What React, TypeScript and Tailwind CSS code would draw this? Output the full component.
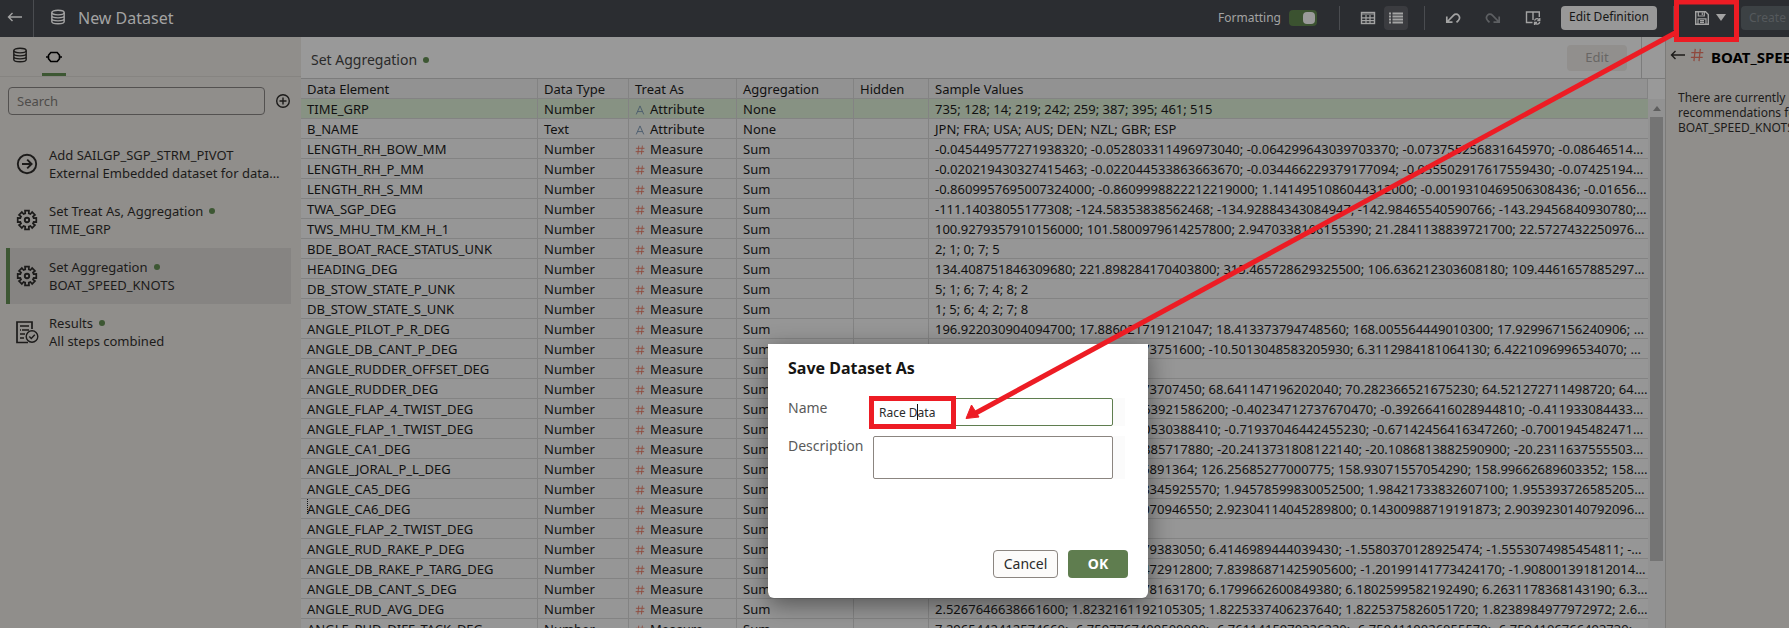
import React from "react";

type Kind = "Attribute" | "Measure";
type Row = [name: string, values: string, type?: string, kind?: Kind, aggregation?: string];

const rows: Row[] = [
  ["TIME_GRP", "735; 128; 14; 219; 242; 259; 387; 395; 461; 515", "Number", "Attribute", "None"],
  ["B_NAME", "JPN; FRA; USA; AUS; DEN; NZL; GBR; ESP", "Text", "Attribute", "None"],
  ["LENGTH_RH_BOW_MM", "-0.045449577271938320; -0.052803311496973040; -0.064299643039703370; -0.073755256831645970; -0.086465142660141"],
  ["LENGTH_RH_P_MM", "-0.020219430327415463; -0.022044533863663670; -0.034466229379177094; -0.055502917617559430; -0.074251942336559"],
  ["LENGTH_RH_S_MM", "-0.8609957695007324000; -0.8609998822212219000; 1.1414951086044312000; -0.0019310469506308436; -0.016562500596"],
  ["TWA_SGP_DEG", "-111.14038055177308; -124.58353838562468; -134.92884343084947; -142.98465540590766; -143.29456840930780; -144.0912"],
  ["TWS_MHU_TM_KM_H_1", "100.9279357910156000; 101.5800979614257800; 2.9470338106155390; 21.2841138839721700; 22.5727432250976570; 23.1"],
  ["BDE_BOAT_RACE_STATUS_UNK", "2; 1; 0; 7; 5"],
  ["HEADING_DEG", "134.408751846309680; 221.898284170403800; 315.465728629325500; 106.636212303608180; 109.446165788529750; 110.23"],
  ["DB_STOW_STATE_P_UNK", "5; 1; 6; 7; 4; 8; 2"],
  ["DB_STOW_STATE_S_UNK", "1; 5; 6; 4; 2; 7; 8"],
  ["ANGLE_PILOT_P_R_DEG", "196.922030904094700; 17.886021719121047; 18.413373794748560; 168.005564449010300; 17.929967156240906; 172.4410"],
  ["ANGLE_DB_CANT_P_DEG", "6.1983746510293840; 6.2048319473751600; -10.5013048583205930; 6.3112984181064130; 6.4221096996534070; 6.451208"],
  ["ANGLE_RUDDER_OFFSET_DEG", ""],
  ["ANGLE_RUDDER_DEG", "67.918264530192740; 66.203948173707450; 68.641147196202040; 70.282366521675230; 64.521272711498720; 64.9441028"],
  ["ANGLE_FLAP_4_TWIST_DEG", "-0.41293847162038400; -0.39810463921586200; -0.40234712737670470; -0.39266416028944810; -0.41193308443340200"],
  ["ANGLE_FLAP_1_TWIST_DEG", "-0.70918273645501200; -0.6983140530388410; -0.71937046442455230; -0.67142456416347260; -0.700194548247182100"],
  ["ANGLE_CA1_DEG", "-20.198273645501280; -20.182730885717880; -20.2413731808122140; -20.1086813882590900; -20.231163755550337100"],
  ["ANGLE_JORAL_P_L_DEG", "125.87364519283740; 126.0918275891364; 126.25685277000775; 158.93071557054290; 158.99662689603352; 158.9012038"],
  ["ANGLE_CA5_DEG", "1.92736455102983700; 1.93827408345925570; 1.94578599830052500; 1.98421733832607100; 1.95539372658520550; 1.9412"],
  ["ANGLE_CA6_DEG", "2.91827364501928300; 0.1502938070946550; 2.92304114045289800; 0.14300988719191873; 2.90392301407920960; -1.204"],
  ["ANGLE_FLAP_2_TWIST_DEG", ""],
  ["ANGLE_RUD_RAKE_P_DEG", "6.3928174650192830; 6.4018274479383050; 6.4146989444039430; -1.5580370128925474; -1.5553074985454811; -1.5501"],
  ["ANGLE_DB_RAKE_P_TARG_DEG", "7.81927364501827300; 7.8273645472912800; 7.83986871425905600; -1.20199141773424170; -1.90800139181201440; 7.1"],
  ["ANGLE_DB_CANT_S_DEG", "6.1827364519283740; 6.1726354878163170; 6.1799662600849380; 6.1802599582192490; 6.2631178368143190; 6.379301"],
  ["ANGLE_RUD_AVG_DEG", "2.5267646638661600; 1.8232161192105305; 1.8225337406237640; 1.8225375826051720; 1.8238984977972972; 2.6298140"],
  ["ANGLE_RUD_DIFF_TACK_DEG", "7.2965442412574660; -6.7597767409500000; -6.7611415970326220; -6.7594110026055570; -6.7594106766493730; 7.510"],
];

function Svg({ size = 16, className = "", children }: { size?: number; className?: string; children: React.ReactNode }) {
  return (
    <svg width={size} height={size} viewBox="0 0 16 16" fill="none" stroke="currentColor" strokeWidth="1.4" className={`shrink-0 ${className}`} aria-hidden="true">
      {children}
    </svg>
  );
}

const Database = ({ className = "" }: { className?: string }) => (
  <Svg className={className}>
    <ellipse cx="8" cy="3.6" rx="6.2" ry="2.3" />
    <path d="M1.8 3.6v8.8c0 1.3 2.8 2.3 6.2 2.3s6.2-1 6.2-2.3V3.6M1.8 6.6c0 1.3 2.8 2.3 6.2 2.3s6.2-1 6.2-2.3M1.8 9.6c0 1.3 2.8 2.3 6.2 2.3s6.2-1 6.2-2.3" />
  </Svg>
);

const ArrowLeft = ({ className = "" }: { className?: string }) => (
  <Svg className={className}>
    <path d="M1.5 8H15M5.5 4l-4 4 4 4" />
  </Svg>
);

const Hash = ({ size, className = "" }: { size: number; className?: string }) => (
  <Svg size={size} className={`text-[#8f493d] ${className}`}>
    <path d="M6 1L4.5 15M11.8 1l-1.500 14M1.500 5.300h13.700M1 10.600h13.500" />
  </Svg>
);

// Outline of an eight-toothed wheel centred on (11, 11).
const gearPoints = [0, 45, 90, 135, 180, 225, 270, 315]
  .flatMap((a) => [
    [6.9, a - 15],
    [9.5, a - 12],
    [9.5, a + 12],
    [6.9, a + 15],
  ])
  .map(([r, a]) => {
    const t = (a * Math.PI) / 180;
    return `${(11 + r * Math.cos(t)).toFixed(2)},${(11 + r * Math.sin(t)).toFixed(2)}`;
  })
  .join(" ");

const Gear = () => (
  <svg width="22" height="22" viewBox="0 0 22 22" fill="none" stroke="currentColor" strokeWidth="1.7" aria-hidden="true">
    <polygon points={gearPoints} />
    <circle cx="11" cy="11" r="2.2" strokeWidth="1.9" />
  </svg>
);

const AddStep = () => (
  <svg width="22" height="22" viewBox="0 0 22 22" fill="none" stroke="currentColor" strokeWidth="1.9" aria-hidden="true">
    <circle cx="11" cy="11" r="9.2" />
    <path d="M6 11h9.5M11.2 6.6l4.400 4.400-4.400 4.400" />
  </svg>
);

const ResultStep = () => (
  <svg width="24" height="24" viewBox="0 0 24 24" fill="none" stroke="currentColor" strokeWidth="1.7" aria-hidden="true">
    <path d="M17 9V2H2v20.500h11" />
    <path d="M5 6h9M7 10h7M5 10h1M5 14h5M5 18h4" />
    <circle cx="17" cy="16.500" r="5.800" strokeWidth="1.400" />
    <path d="M14.300 16.500l2 2 3.500-3.800" strokeWidth="1.400" />
  </svg>
);

const Dot = () => <span className="size-1.5 shrink-0 rounded-full bg-[#3d5733]" />;

const steps = [
  { icon: <AddStep />, title: "Add SAILGP_SGP_STRM_PIVOT", detail: "External Embedded dataset for datamart", dot: false },
  { icon: <Gear />, title: "Set Treat As, Aggregation", detail: "TIME_GRP", dot: true },
  { icon: <Gear />, title: "Set Aggregation", detail: "BOAT_SPEED_KNOTS", dot: true, active: true },
  { icon: <ResultStep />, title: "Results", detail: "All steps combined", dot: true },
];

function Header() {
  return (
    <header className="flex h-[37px] shrink-0 items-center bg-[#2b2d31] text-[#a3a3a3]">
      <button aria-label="Back" className="flex h-full w-[34px] items-center justify-center border-r border-[#4a4c50] pr-1 pb-1">
        <ArrowLeft />
      </button>
      <Database className="mb-1 ml-4" />
      <h1 className="ml-3 pb-0.5 text-base">New Dataset</h1>
      <div className="ml-auto flex h-6 items-center pb-0.5">
        <span className="text-xs">Formatting</span>
        <button role="switch" aria-checked="true" aria-label="Formatting" className="ml-2 flex h-4 w-7 items-center justify-end rounded bg-[#3b5230] px-0.5">
          <span className="h-3 w-3 rounded-sm bg-[#9a9a9a]" />
        </button>
        <span className="ml-[22px] h-6 w-px bg-[#4a4c50]" />
        <button aria-label="Grid view" className="ml-3 flex h-6 w-8 items-center justify-center">
          <Svg>
            <rect x="1.500" y="2.500" width="13" height="11" />
            <path d="M2 4h12M6 5v8M10 5v8M2 7.800h12M2 10.600h12" strokeWidth="1.200" />
          </Svg>
        </button>
        <button aria-label="List view" className="flex h-6 w-6 items-center justify-center rounded-sm bg-[#3b3c40]">
          <Svg>
            <path d="M1 3.500h2M4.500 3.500H15M1 6.500h2M4.500 6.500H15M1 9.500h2M4.500 9.500H15M1 12.500h2M4.500 12.500H15" strokeWidth="1.800" />
          </Svg>
        </button>
        <span className="ml-4 h-6 w-px bg-[#4a4c50]" />
        <button aria-label="Undo" className="ml-5">
          <Svg>
            <path d="M1.800 6.500v5.700h5.700M2 12L8.500 5.300c1.500-1.500 3.700-1.500 5 0s1.300 3.500 0 5l-2 2" strokeWidth="1.700" />
          </Svg>
        </button>
        <button aria-label="Redo" className="ml-6 text-[#5d5f62]">
          <Svg>
            <path d="M14.200 6.500v5.700H8.500M14 12L7.500 5.300C6 3.800 3.800 3.800 2.500 5.300s-1.300 3.500 0 5l2 2" strokeWidth="1.700" />
          </Svg>
        </button>
        <button aria-label="Preview" className="ml-6">
          <Svg>
            <path d="M7.500 12.500H1.500V2h12.800v5M8 2v8" />
            <path d="M9.500 10.500a2.800 2.800 0 0 1 5-.5M14.800 12a2.800 2.800 0 0 1-5 1M14.800 8v2.500h-2.500M9.500 15v-2.500H12" strokeWidth="1.300" />
          </Svg>
        </button>
        <button className="ml-5 h-6 w-24 rounded bg-[#989898] pb-px text-xs whitespace-nowrap text-[#161616]">Edit Definition</button>
        <span className="ml-4 h-6 w-px bg-[#4a4c50]" />
        <button aria-label="Save" className="ml-5 flex h-6 items-center gap-1.5">
          <Svg>
            <path d="M1.700 1.700h9.800l2.800 2.800v9.800H1.700z" />
            <path d="M4.300 2v4h6V2M8.300 2.500v2.500M4 14V8.800h8V14M6 10.600h4M6 12.400h4" strokeWidth="1.200" />
          </Svg>
          <svg width="10" height="7" viewBox="0 0 10 7" fill="currentColor" aria-hidden="true">
            <path d="M0 0h10L5 7z" />
          </svg>
        </button>
        <div className="ml-[15px] w-12 overflow-hidden">
          <button disabled className="block h-6 w-28 rounded bg-[#3c4144] pl-2 text-left text-xs whitespace-nowrap text-[#55595c]">Create Dataset</button>
        </div>
      </div>
    </header>
  );
}

function StepsPanel() {
  return (
    <aside className="flex w-[301px] shrink-0 flex-col bg-[#908e8b] text-[#1c1b1a]">
      <nav className="flex h-10 border-b border-[#868481] pl-2">
        <button aria-label="Data" className="flex w-6 items-center justify-center pb-1">
          <Database />
        </button>
        <button aria-label="Steps" className="ml-2.5 flex w-6 items-center justify-center border-y-3 border-t-transparent border-b-[#3d5733]">
          <Svg className="text-black">
            <path d="M0 8h2.500M13.500 8H16M4.800 3.500h6.400l2.300 2.700v3.600l-2.300 2.700H4.800L2.500 9.800V6.200z" strokeWidth="1.600" />
          </Svg>
        </button>
      </nav>
      <div className="flex items-center gap-2.5 px-2 pt-2.5">
        <input aria-label="Search" placeholder="Search" className="h-7 w-[257px] rounded border border-[#535150] px-2 text-[13px] placeholder:text-[#4e4c4a]" />
        <button aria-label="Add step">
          <Svg>
            <circle cx="8" cy="8" r="6.300" />
            <path d="M8 4.500v7M4.500 8h7" />
          </Svg>
        </button>
      </div>
      <ul className="mt-[21px] pr-2.5 pl-1.5">
        {steps.map((s, i) => (
          <li key={i} className={`flex h-14 items-center border-l-4 ${s.active ? "border-[#3d5733] bg-[#868482]" : "border-transparent"}`}>
            <span className="flex w-[34px] shrink-0 justify-center">{s.icon}</span>
            <div className="min-w-0 pl-[5px] text-[13px] leading-[18px]">
              <div className="flex items-center gap-1.5 whitespace-nowrap">
                {s.title}
                {s.dot && <Dot />}
              </div>
              <div className="truncate">{s.detail}</div>
            </div>
          </li>
        ))}
      </ul>
    </aside>
  );
}

const cell = "truncate border-b border-[#838383] pt-0.5 pl-1.5 text-left font-normal";

function DataGrid() {
  return (
    <main className="flex min-w-0 flex-1 flex-col bg-[#999999] text-[#111111]">
      <div className="flex h-[42px] shrink-0 items-center border-b border-[#7c7c7c]">
        <h2 className="flex items-center gap-1.5 pt-1 pl-2.5 text-sm text-[#2a2a2a]">
          Set Aggregation <Dot />
        </h2>
        <button disabled className="mr-3.5 ml-auto h-[26px] w-[60px] rounded bg-[#918f8d] text-[13px] text-[#686664]">Edit</button>
        <span className="h-full w-6 border-l border-[#7c7c7c]" />
      </div>
      <div className="flex min-h-0 flex-1">
        <div className="min-w-0 flex-1 overflow-hidden">
          <table className="w-full table-fixed border-separate border-spacing-0 bg-[#969696] text-[13px] leading-[17px]">
            <colgroup>
              <col className="w-[237px]" />
              <col className="w-[91px]" />
              <col className="w-[108px]" />
              <col className="w-[117px]" />
              <col className="w-[75px]" />
              <col />
            </colgroup>
            <thead>
              <tr className="h-5 bg-[#929292]">
                {["Data Element", "Data Type", "Treat As", "Aggregation", "Hidden", "Sample Values"].map((h) => (
                  <th key={h} scope="col" className={`${cell} border-r`}>{h}</th>
                ))}
              </tr>
            </thead>
            <tbody>
              {rows.map(([name, values, type = "Number", kind = "Measure", agg = "Sum"], i) => (
                <tr key={name} className={`h-5 ${i === 0 ? "bg-[#879283]" : ""}`}>
                  <td className={`${cell} border-r`}>{name}</td>
                  <td className={`${cell} border-r`}>{type}</td>
                  <td className={`${cell} border-r`}>
                    <span className="flex items-center">
                      <span className="mr-[5px] flex w-2.5 justify-center">
                        {kind === "Measure" ? (
                          <Hash size={10} />
                        ) : (
                          <Svg size={10} className="text-[#47596c]">
                            <path d="M2 15L8 1.500 14 15M4.300 10.500h7.400" />
                          </Svg>
                        )}
                      </span>
                      {kind}
                    </span>
                  </td>
                  <td className={`${cell} border-r`}>{agg}</td>
                  <td className={`${cell} border-r`} />
                  <td className={cell}>{values}</td>
                </tr>
              ))}
            </tbody>
          </table>
        </div>
        <div className="mt-5 flex w-[17px] shrink-0 flex-col items-center bg-[#929292]">
          <svg width="8" height="5" viewBox="0 0 8 5" fill="#5e5e5e" className="mt-[7px] mb-1.5 shrink-0" aria-hidden="true">
            <path d="M4 0l4 5H0z" />
          </svg>
          <span className="h-[84%] w-[13px] bg-[#747474]" />
        </div>
      </div>
    </main>
  );
}

function DetailPanel() {
  return (
    <aside className="w-[124px] shrink-0 overflow-hidden border-l border-[#7c7b79] bg-[#908e8b] pl-1 whitespace-nowrap text-[#1c1b1a]">
      <div className="flex h-10 items-center">
        <button aria-label="Back to list" className="pb-1"><ArrowLeft /></button>
        <Hash size={14} className="mb-1 ml-1" />
        <h3 className="ml-[7px] text-[15px] font-bold text-black">BOAT_SPEED_KNOTS</h3>
      </div>
      <p className="mt-[13px] pl-2 text-xs leading-[15px]">
        There are currently no
        <br />
        recommendations for
        <br />
        BOAT_SPEED_KNOTS.
      </p>
    </aside>
  );
}

function SaveDialog() {
  return (
    <section role="dialog" aria-labelledby="save-title" className="absolute top-[344px] left-[768px] flex h-[254px] w-[380px] flex-col rounded-b-md bg-white px-5 pt-3 pb-5 text-sm text-[#5a5a5a] shadow-[0_6px_24px_rgba(0,0,0,0.45)]">
      <h2 id="save-title" className="text-base leading-6 font-bold text-[#161513]">Save Dataset As</h2>
      <form className="mt-[18px] flex flex-1 flex-col">
        <div className="flex items-start">
          <label htmlFor="name" className="w-[85px] leading-5">Name</label>
          <input id="name" defaultValue="Race Data" className="h-7 w-60 rounded-xs border border-[#5f7d4f] px-[5px] text-xs text-[#2b2b2b]" />
          <span className="h-7 w-3 bg-[#fbfbfb]" />
        </div>
        <div className="mt-2.5 flex items-start">
          <label htmlFor="description" className="w-[85px] leading-5">Description</label>
          <textarea id="description" className="h-[43px] w-60 resize-none rounded-xs border border-[#8b8580]" />
          <span className="h-[43px] w-3 bg-[#fbfbfb]" />
        </div>
        <div className="mt-auto flex justify-end gap-2.5">
          <button type="button" className="h-7 w-[65px] rounded border border-[#8b8580] bg-[#fcfbfa] text-[#2b2b2b]">Cancel</button>
          <button type="button" className="h-7 w-[60px] rounded bg-[#5f7d4f] font-bold text-white">OK</button>
        </div>
      </form>
    </section>
  );
}

function Callouts() {
  return (
    <svg className="pointer-events-none absolute top-0 left-0" width="1789" height="628" viewBox="0 0 1789 628" fill="none" stroke="#ed1c24" strokeWidth="5" aria-hidden="true">
      <rect x="1676.500" y="2" width="60" height="37.500" />
      <rect x="871.500" y="398.500" width="82" height="28" />
      <path d="M1676 32.500L974 414" />
      <path d="M966 418.500l5.500-13.500 7.500 12z" fill="#ed1c24" strokeWidth="1" />
      <path d="M917.500 404v16" stroke="#111111" strokeWidth="1" />
      <path d="M307.500 499v15" stroke="#111111" strokeWidth="1" strokeDasharray="1 1" />
    </svg>
  );
}

export default function App() {
  return (
    <div className="relative flex h-screen flex-col overflow-hidden font-['Noto_Sans',sans-serif]">
      <Header />
      <div className="flex min-h-0 flex-1">
        <StepsPanel />
        <DataGrid />
        <DetailPanel />
      </div>
      <SaveDialog />
      <Callouts />
    </div>
  );
}
